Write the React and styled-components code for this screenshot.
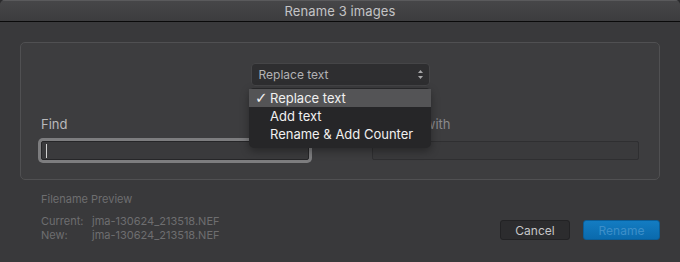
import React from "react";
import styled, { createGlobalStyle } from "styled-components";

const Global = createGlobalStyle`
  html, body { margin: 0; padding: 0; background: #2b2b2d; }
  body { font-family: Inter, "Noto Sans", "Liberation Sans", sans-serif; -webkit-font-smoothing: antialiased; }
  * { box-sizing: border-box; }
`;

const Window = styled.div`
  width: 680px;
  height: 262px;
  background: #39393b;
  border-radius: 5px 5px 0 0;
  overflow: hidden;
  display: flex;
  flex-direction: column;
`;

const TitleBar = styled.div`
  height: 22px;
  flex: none;
  background: linear-gradient(#474749, #3c3c3e);
  border-bottom: 1px solid #0a0a0a;
  box-shadow: inset 0 1px 0 #5a5a5c;
  display: flex;
  align-items: center;
  justify-content: center;
  color: #c4c4c6;
  font-size: 13px;
  letter-spacing: 0.1px;
`;

const Body = styled.div`
  padding: 20px 20px 0 20px;
  display: flex;
  flex-direction: column;
`;

const Panel = styled.div`
  position: relative;
  height: 138px;
  border: 1px solid #505052;
  border-radius: 5px;
  background: #3d3d3f;
  padding: 20px 20px 0 20px;
  display: flex;
  flex-direction: column;
  align-items: center;
`;

const Select = styled.div`
  width: 179px;
  height: 23px;
  background: #2e2e30;
  border: 1px solid #454547;
  border-radius: 4px;
  display: flex;
  align-items: center;
  justify-content: space-between;
  padding: 0 5px 0 7px;
  color: #b2b2b4;
  font-size: 12px;
`;

const Fields = styled.div`
  align-self: stretch;
  margin-top: 30px;
  display: grid;
  grid-template-columns: 268px 267px;
  justify-content: space-between;
`;

const Field = styled.div`
  display: flex;
  flex-direction: column;
  gap: 9px;
`;

const Label = styled.div`
  height: 16px;
  line-height: 16px;
  font-size: 13px;
  color: ${(p) => (p.$active ? "#b9b9bb" : "#8a8a8c")};
`;

const Input = styled.div`
  position: relative;
  height: 19px;
  background: #3a3a3c;
  border: 1px solid ${(p) => (p.$focus ? "#262628" : "#2f2f31")};
  border-radius: 2px;
  box-shadow: ${(p) => (p.$focus ? "0 0 0 3px #7d7d7f" : "none")};
`;

const Caret = styled.span`
  position: absolute;
  left: 4px;
  top: 2px;
  width: 1px;
  height: 14px;
  background: #d0d0d0;
`;

const Menu = styled.div`
  position: absolute;
  left: 228px;
  top: 45px;
  width: 182px;
  padding: 1px 0 5px;
  background: #262628;
  border-radius: 5px;
  box-shadow: 0 3px 8px rgba(0, 0, 0, 0.35);
  z-index: 2;
`;

const MenuItem = styled.div`
  height: 18px;
  display: flex;
  align-items: center;
  padding-left: 6px;
  font-size: 13px;
  color: #f0f0f0;
  background: ${(p) => (p.$selected ? "#545456" : "transparent")};
`;

const Check = styled.span`
  width: 15px;
  display: inline-block;
  font-size: 15px;
  line-height: 18px;
  font-family: "DejaVu Sans", sans-serif;
`;

const Footer = styled.div`
  display: flex;
  justify-content: space-between;
  align-items: flex-end;
  padding-left: 21px;
  margin-top: 12px;
`;

const Preview = styled.div`
  display: flex;
  flex-direction: column;
  color: #6e6e70;
  font-size: 11px;
`;

const PreviewTitle = styled.div`
  line-height: 14px;
  margin-bottom: 8px;
`;

const PreviewRow = styled.div`
  display: grid;
  grid-template-columns: 51px auto;
  line-height: 14px;
`;

const Buttons = styled.div`
  display: flex;
  gap: 13px;
  margin-bottom: 2px;
`;

const Button = styled.div`
  height: 20px;
  width: ${(p) => p.$w}px;
  border-radius: 3px;
  display: flex;
  align-items: center;
  justify-content: center;
  font-size: 12px;
  background: ${(p) => (p.$primary ? "linear-gradient(#137cc2, #0a6aad)" : "#2c2c2e")};
  border: 1px solid ${(p) => (p.$primary ? "#0a5d98" : "#222224")};
  color: ${(p) => (p.$primary ? "#3d8fc9" : "#c6c6c8")};
`;

const Arrows = () => (
  <svg width="7" height="11" viewBox="0 0 7 11">
    <path d="M3.5 1 L6 4 L1 4 Z" fill="#a8a8aa" />
    <path d="M3.5 10 L6 7 L1 7 Z" fill="#a8a8aa" />
  </svg>
);

export default function App() {
  return (
    <>
      <Global />
      <Window>
        <TitleBar>Rename 3 images</TitleBar>
        <Body>
          <Panel>
            <Select>
              <span>Replace text</span>
              <Arrows />
            </Select>
            <Fields>
              <Field>
                <Label $active>Find</Label>
                <Input $focus>
                  <Caret />
                </Input>
              </Field>
              <Field>
                <Label>Replace with</Label>
                <Input />
              </Field>
            </Fields>
            <Menu>
              <MenuItem $selected>
                <Check>✓</Check>Replace text
              </MenuItem>
              <MenuItem>
                <Check />Add text
              </MenuItem>
              <MenuItem>
                <Check />Rename &amp; Add Counter
              </MenuItem>
            </Menu>
          </Panel>
          <Footer>
            <Preview>
              <PreviewTitle>Filename Preview</PreviewTitle>
              <PreviewRow>
                <span>Current:</span>
                <span>jma-130624_213518.NEF</span>
              </PreviewRow>
              <PreviewRow>
                <span>New:</span>
                <span>jma-130624_213518.NEF</span>
              </PreviewRow>
            </Preview>
            <Buttons>
              <Button $w={70}>Cancel</Button>
              <Button $w={77} $primary>
                Rename
              </Button>
            </Buttons>
          </Footer>
        </Body>
      </Window>
    </>
  );
}
